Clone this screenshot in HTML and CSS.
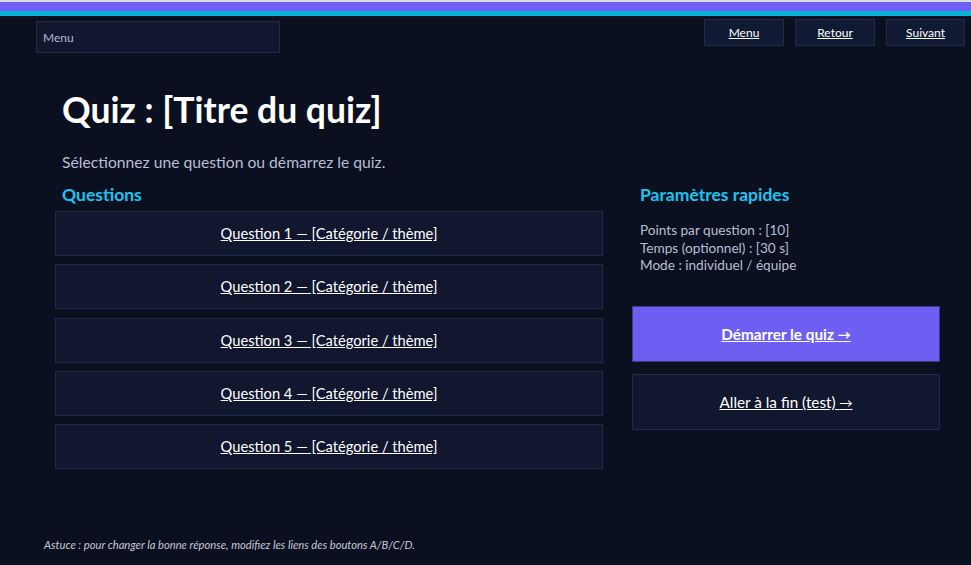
FILE: index.html
```html
<!DOCTYPE html>
<html lang="fr">
<head>
<meta charset="utf-8">
<title>Quiz</title>
<link rel="stylesheet" href="styles.css">
</head>
<body>
<div class="stripe">
  <div class="stripe-gray"></div>
  <div class="stripe-purple"></div>
  <div class="stripe-cyan"></div>
</div>
<header class="topbar">
  <div class="menu-field">Menu</div>
  <nav class="nav">
    <a class="nav-btn" href="#">Menu</a>
    <a class="nav-btn" href="#">Retour</a>
    <a class="nav-btn" href="#">Suivant</a>
  </nav>
</header>
<main class="main">
  <h1 class="title">Quiz : [Titre du quiz]</h1>
  <p class="subtitle">Sélectionnez une question ou démarrez le quiz.</p>
  <div class="columns">
    <section class="col-left">
      <h2 class="section-title">Questions</h2>
      <div class="q-list">
        <a class="q-btn" href="#">Question 1 — [Catégorie / thème]</a>
        <a class="q-btn" href="#">Question 2 — [Catégorie / thème]</a>
        <a class="q-btn" href="#">Question 3 — [Catégorie / thème]</a>
        <a class="q-btn" href="#">Question 4 — [Catégorie / thème]</a>
        <a class="q-btn" href="#">Question 5 — [Catégorie / thème]</a>
      </div>
    </section>
    <aside class="col-right">
      <h2 class="section-title">Paramètres rapides</h2>
      <div class="params">
        <div>Points par question : [10]</div>
        <div>Temps (optionnel) : [30 s]</div>
        <div>Mode : individuel / équipe</div>
      </div>
      <a class="big-btn primary" href="#">Démarrer le quiz <span class="arrow">→</span></a>
      <a class="big-btn secondary" href="#">Aller à la fin (test) <span class="arrow">→</span></a>
    </aside>
  </div>
</main>
<footer class="footer">Astuce : pour changer la bonne réponse, modifiez les liens des boutons A/B/C/D.</footer>
</body>
</html>
```
FILE: styles.css
```css
html, body {
  margin: 0;
  padding: 0;
}
body {
  background: #0b1020;
  color: #e8ecf6;
  font-family: Lato, "Open Sans", sans-serif;
  height: 565px;
  overflow: hidden;
}
.stripe-gray { height: 2px; background: #dcdce0; }
.stripe-purple { height: 9px; background: #6c5ff1; }
.stripe-cyan { height: 5px; background: #06b3d6; }

.topbar {
  display: flex;
  justify-content: space-between;
  align-items: flex-start;
  padding: 3px 6px 0 36px;
}
.menu-field {
  margin-top: 2px;
  width: 244px;
  height: 32px;
  box-sizing: border-box;
  background: #10172f;
  border: 1px solid #222b4a;
  color: #b4bbd0;
  font-size: 12px;
  line-height: 32px;
  padding-left: 6px;
}
.nav {
  display: flex;
  gap: 11px;
}
.nav-btn {
  width: 80px;
  height: 27px;
  box-sizing: border-box;
  background: #111a33;
  border: 1px solid #222c4a;
  color: #ffffff;
  font-size: 12px;
  line-height: 25px;
  text-align: center;
  text-decoration: underline;
}
.nav-btn:last-child { width: 79px; }

.main {
  padding-left: 55px;
}
.title {
  margin: 36px 0 0 7px;
  font-size: 35.5px;
  line-height: 41px;
  font-weight: 700;
  color: #ffffff;
}
.subtitle {
  margin: 22px 0 0 7px;
  font-size: 15.7px;
  line-height: 20px;
  color: #b8bfd4;
}
.columns {
  display: grid;
  grid-template-columns: 548px 308px;
  column-gap: 29px;
  margin-top: 12px;
}
.section-title {
  margin: 0 0 0 7px;
  font-size: 17.5px;
  line-height: 22px;
  font-weight: 700;
  color: #1ec4f0;
}
.col-right .section-title { margin-left: 8px; }
.q-list {
  display: flex;
  flex-direction: column;
  gap: 8.25px;
  margin-top: 5px;
}
.q-btn {
  display: block;
  height: 45px;
  box-sizing: border-box;
  background: #10172f;
  border: 1px solid #202a4a;
  color: #ffffff;
  font-size: 14.7px;
  line-height: 43px;
  text-align: center;
  text-decoration: underline;
}
.params {
  margin: 16px 0 0 8px;
  font-size: 13.6px;
  line-height: 17.5px;
  color: #b8bfd4;
}
.big-btn {
  display: block;
  height: 56px;
  box-sizing: border-box;
  font-size: 15.3px;
  line-height: 54px;
  text-align: center;
  color: #ffffff;
  text-decoration: underline;
}
.arrow {
  font-family: "Noto Sans CJK JP", sans-serif;
  font-size: 13px;
}
.primary {
  margin-top: 31px;
  background: #6c5ff1;
  border: 1px solid #3d3a8c;
  font-weight: 700;
}
.secondary {
  margin-top: 12px;
  background: #10172f;
  border: 1px solid #222b4a;
}
.footer {
  margin-top: 69px;
  padding-left: 44px;
  font-size: 11.2px;
  line-height: 14px;
  font-style: italic;
  color: #c4c8d4;
}
```
